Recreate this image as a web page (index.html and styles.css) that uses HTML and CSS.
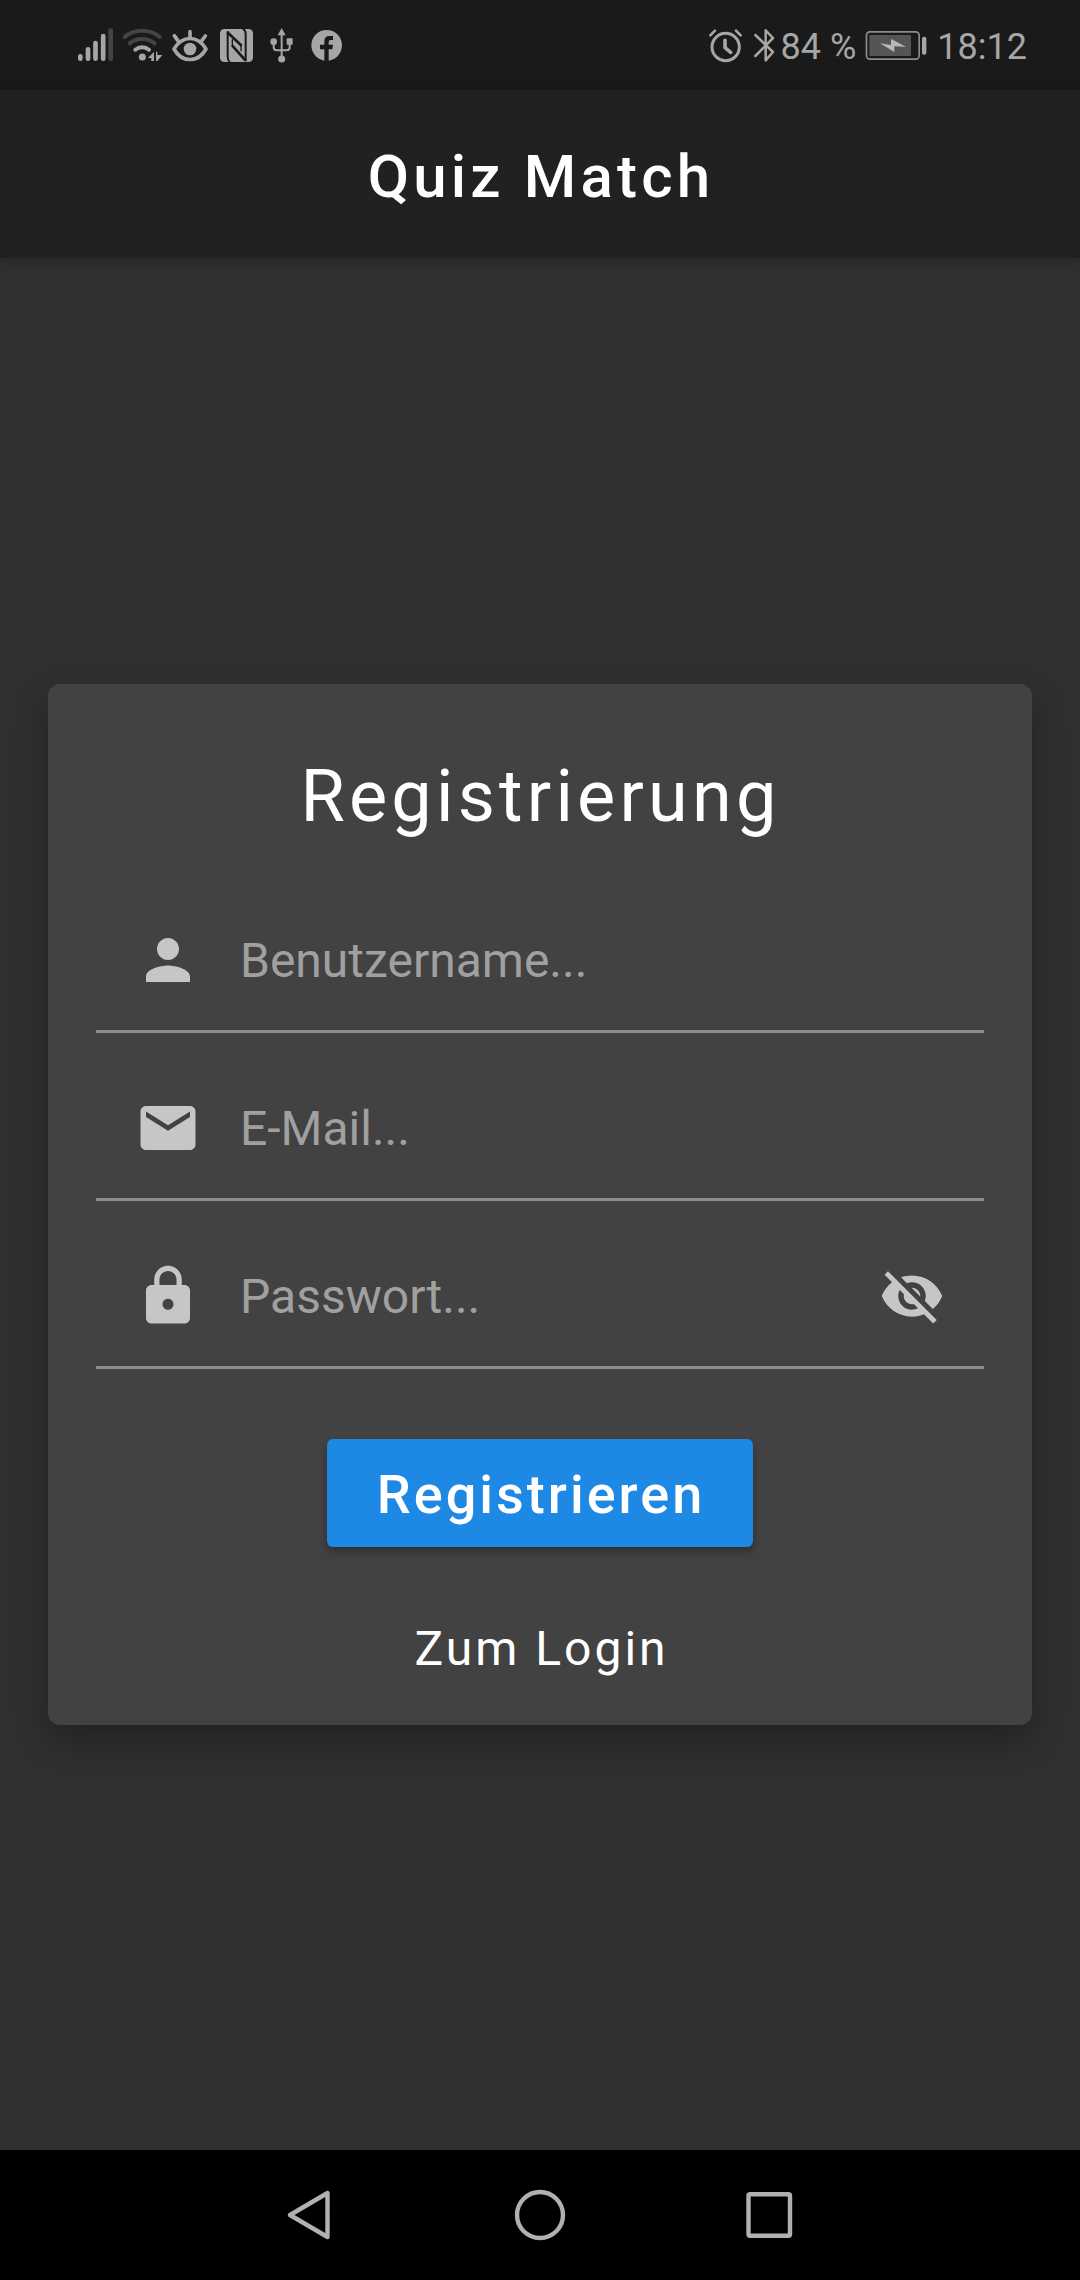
FILE: index.html
```html
<!DOCTYPE html>
<html lang="de">
<head>
<meta charset="utf-8">
<title>Quiz Match</title>
<link rel="stylesheet" href="styles.css">
</head>
<body>
<div class="screen">
  <div class="status">
    <div class="status-left">
      <svg class="signal" width="37" height="40" viewBox="51 45 111 120"><g fill="none" stroke="#a6a6a6" stroke-width="14" stroke-linecap="round"><path d="M61 139v7M84 118v28M106.500 99v47M129.500 78v68"/><path d="M152 61v85" stroke="#444"/></g></svg>
      <svg class="wifi" width="41" height="40" viewBox="186 45 123 120"><g fill="none" stroke-width="12" stroke-linecap="round"><path d="M194 81C222 56 271 56 299 81" stroke="#444"/><path d="M209 100C230 83 263 83 284 100" stroke="#444"/><path d="M226 119C238 109 255 109 267 119" stroke="#a6a6a6"/></g><circle cx="247" cy="141" r="10.500" fill="#a6a6a6"/><path d="M264 144l18-19v28h-8v-9zM288 125h4v10h15l-15 18h-4z" fill="#a6a6a6"/></svg>
      <svg class="eye" width="38" height="40" viewBox="333 45 114 120"><g fill="none" stroke="#a6a6a6" stroke-width="11" stroke-linecap="round" stroke-linejoin="round"><path d="M342 117C367 75 413 75 438 117C415 159 365 159 342 117z"/><path d="M390 65v18M343 77l10 14M436 78l-10 13"/></g><circle cx="390" cy="117" r="19" fill="#a6a6a6"/></svg>
      <svg class="nfc" width="35" height="40" viewBox="477 45 105 120"><rect x="480" y="57" width="99" height="99" rx="13" fill="#a6a6a6"/><g fill="none" stroke="#1a1a1a"><path d="M503 64V142Q503 151 510 157" stroke-width="6"/><path d="M548 56Q557 61 557 71V154" stroke-width="6"/><path d="M502 67L545 107" stroke-width="8"/><path d="M516 106L557 152" stroke-width="8"/><path d="M517 88V108M543 103V124" stroke-width="4"/></g></svg>
      <svg class="usb" width="25" height="40" viewBox="627 45 75 120"><path d="M665 70v76M641 98v14q0 9 9 9h30q9 0 9-9V98" fill="none" stroke="#a6a6a6" stroke-width="6"/><path d="M665 54l12 22h-24z" fill="#a6a6a6"/><circle cx="641" cy="95" r="10" fill="#a6a6a6"/><rect x="680" y="85" width="18" height="19" rx="2" fill="#a6a6a6"/><circle cx="665" cy="147" r="10.500" fill="#a6a6a6"/></svg>
      <svg class="facebook" width="33" height="40" viewBox="750 45 99 120"><circle cx="800" cy="106" r="46" fill="#a6a6a6"/><path d="M793 155V118H780V104H793V94Q793 78 809 78H819V90H812Q806 90 806 96V104H819L817 118H806V155z" fill="#1a1a1a"/></svg>
    </div>
    <div class="status-right">
      <svg class="alarm" width="35" height="40" viewBox="54 45 105 120"><g fill="none" stroke="#a6a6a6" stroke-linecap="round" stroke-linejoin="round"><circle cx="107" cy="111" r="41" stroke-width="9"/><path d="M105 91v22l17 14" stroke-width="11"/><path d="M61 76l14-14M152 76l-14-14" stroke-width="8"/></g></svg>
      <svg class="bluetooth" width="23" height="40" viewBox="189 45 69 120"><path d="M196 75L249 126L227 151V61L249 84L196 138" fill="none" stroke="#a6a6a6" stroke-width="7.500" stroke-linecap="round" stroke-linejoin="round"/></svg>
      <span class="percent">84 %</span>
      <svg class="battery" width="63" height="40" viewBox="525 45 189 120"><rect x="529.500" y="65.500" width="158" height="82" rx="10" fill="none" stroke="#8c8c8c" stroke-width="5"/><rect x="538" y="75" width="125" height="63" rx="3" fill="#555"/><path d="M570 100L603 105V87L648 110L613 109V126z" fill="#b8b8b8"/><rect x="696" y="80" width="13" height="54" rx="6" fill="#a6a6a6"/></svg>
      <span class="time">18:12</span>
    </div>
  </div>
  <header class="appbar">Quiz Match</header>
  <main class="content">
    <form class="card">
      <h1 class="heading">Registrierung</h1>
      <div class="field">
        <div class="field-icon"><svg class="icon" viewBox="0 0 24 24"><path d="M12 12c2.210 0 4-1.790 4-4s-1.790-4-4-4-4 1.790-4 4 1.790 4 4 4zm0 2c-2.670 0-8 1.340-8 4v2h16v-2c0-2.660-5.330-4-8-4z"/></svg></div>
        <span class="hint">Benutzername...</span>
      </div>
      <div class="field">
        <div class="field-icon"><svg class="icon" viewBox="0 0 24 24"><path d="M20 4H4c-1.100 0-1.990.9-1.990 2L2 18c0 1.100.9 2 2 2h16c1.100 0 2-.9 2-2V6c0-1.100-.9-2-2-2zm0 4l-8 5-8-5V6l8 5 8-5v2z"/></svg></div>
        <span class="hint">E-Mail...</span>
      </div>
      <div class="field">
        <div class="field-icon"><svg class="icon" viewBox="0 0 24 24"><path d="M18 8h-1V6c0-2.760-2.240-5-5-5S7 3.240 7 6v2H6c-1.100 0-2 .9-2 2v10c0 1.100.9 2 2 2h12c1.100 0 2-.9 2-2V10c0-1.100-.9-2-2-2zm-6 9c-1.100 0-2-.9-2-2s.9-2 2-2 2 .9 2 2-.9 2-2 2zm3.100-9H8.900V6c0-1.710 1.390-3.100 3.100-3.100 1.710 0 3.100 1.390 3.100 3.100v2z"/></svg></div>
        <span class="hint">Passwort...</span>
        <div class="field-icon"><svg class="icon" viewBox="0 0 24 24"><path d="M12 7c2.760 0 5 2.240 5 5 0 .65-.13 1.260-.36 1.830l2.920 2.920c1.510-1.260 2.700-2.890 3.430-4.750-1.730-4.390-6-7.500-11-7.500-1.400 0-2.740.25-3.980.7l2.160 2.160C10.740 7.130 11.350 7 12 7zM2 4.270l2.280 2.280.46.46C3.080 8.300 1.780 10.020 1 12c1.730 4.390 6 7.500 11 7.500 1.550 0 3.030-.3 4.380-.84l.42.42L19.730 22 21 20.730 3.270 3 2 4.270zM7.530 9.800l1.550 1.550c-.05.21-.08.43-.08.65 0 1.660 1.340 3 3 3 .22 0 .44-.03.65-.08l1.550 1.550c-.67.33-1.410.53-2.200.53-2.760 0-5-2.240-5-5 0-.79.2-1.530.53-2.200zm4.310-.78l3.150 3.150.02-.16c0-1.660-1.340-3-3-3l-.17.01z"/></svg></div>
      </div>
      <button class="submit" type="button">Registrieren</button>
      <a class="login">Zum Login</a>
    </form>
  </main>
  <nav class="navbar">
    <svg width="50" height="56" viewBox="284 2187 50 56"><path d="M327.500 2193V2237L290 2215z"/></svg>
    <svg class="home" width="56" height="56" viewBox="512 2187 56 56"><circle cx="540" cy="2215" r="23"/></svg>
    <svg width="52" height="56" viewBox="743 2187 52 56"><rect x="748.500" y="2194.200" width="41.500" height="41.600" rx="1.500"/></svg>
  </nav>
</div>
</body>
</html>
```
FILE: styles.css
```css
* { box-sizing: border-box; }
body { margin: 0; background: #303030; font-family: Roboto, sans-serif; }
svg { display: block; flex: none; }

.screen { width: 1080px; height: 2280px; display: flex; flex-direction: column; overflow: hidden; }

.status {
  height: 90px; flex: none; padding: 0 53px 0 77px;
  display: flex; align-items: center; justify-content: space-between;
  background: #1a1a1a; color: #a6a6a6; font-size: 36px; line-height: 42px;
}
.status-left, .status-right { display: flex; align-items: center; }
.wifi, .eye { margin-left: 8px; }
.nfc { margin-left: 10px; }
.usb { margin-left: 15px; }
.facebook { margin-left: 16px; }
.bluetooth { margin-left: 10px; }
.percent { margin-left: 5px; padding-top: 3px; }
.battery { margin-left: 9px; }
.time { margin-left: 9px; padding-top: 3px; }

.appbar {
  height: 168px; flex: none; display: flex; align-items: center; justify-content: center;
  background: #212121; color: #fff; font-size: 60px; font-weight: 500; letter-spacing: 4.2px;
  padding: 4px 0 0 2px;
  position: relative; box-shadow: 0 2px 12px rgba(0, 0, 0, .3);
}

.content { flex: 1; padding: 0 48px; display: flex; flex-direction: column; justify-content: center; }
.card {
  height: 1041px; padding: 71px 48px 0; border-radius: 12px; background: #424242;
  display: flex; flex-direction: column; align-items: center;
  box-shadow: 0 14px 38px rgba(0, 0, 0, .33);
}
.heading { margin: 0 0 49px; padding-left: 1px; font-size: 72px; line-height: 84px; font-weight: 400; letter-spacing: 4.2px; color: #fff; }

.field {
  align-self: stretch; height: 145px; padding-top: 2px; margin-bottom: 23px;
  display: flex; align-items: center; border-bottom: 3px solid #8d8d8d;
}
.field-icon { width: 144px; display: flex; justify-content: center; }
.icon { width: 66px; height: 66px; fill: #c6c6c6; }
.hint { flex: 1; padding-top: 2px; font-size: 48px; line-height: 56px; color: #a0a0a0; }

.submit {
  height: 108px; margin-top: 47px; padding: 3px 48px 0 50px; border: 0; border-radius: 6px;
  background: #1e88e5; color: #fff; font: 500 54px Roboto, sans-serif; letter-spacing: 3px;
  box-shadow: 0 5px 8px rgba(0, 0, 0, .3);
}
.login { margin-top: 74px; padding-left: 3px; font-size: 48px; line-height: 56px; letter-spacing: 3px; color: #fff; }

.navbar {
  height: 130px; flex: none; padding: 0 285px 0 284px; background: #000;
  display: flex; align-items: center; justify-content: space-between;
}
.navbar svg { fill: none; stroke: #b1b1b1; stroke-width: 4.4px; stroke-linejoin: round; }
.navbar .home { margin-left: 3px; }
```
